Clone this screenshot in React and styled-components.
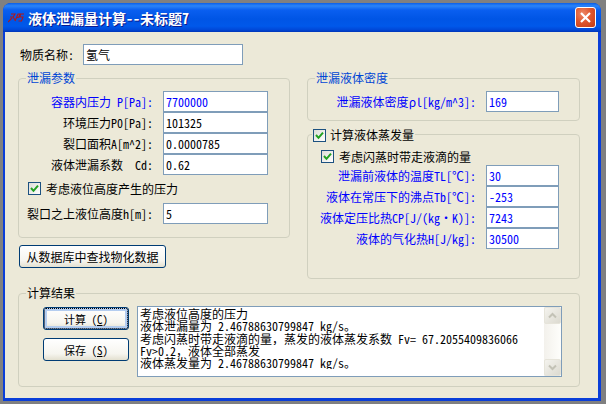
import React from "react";
import styled, { createGlobalStyle } from "styled-components";

const Global = createGlobalStyle`
  html, body { margin: 0; padding: 0; background: #808080; overflow: hidden; }
  body { width: 606px; height: 404px; }
  * { box-sizing: border-box; }
`;

const Win = styled.div`
  margin: 3px 0 0 3px;
  width: 598px;
  height: 398px;
  display: flex;
  flex-direction: column;
  border-radius: 8px 8px 0 0;
  background: #0a3ed8;
  overflow: hidden;
  font-family: "Noto Sans CJK SC", "Liberation Sans", sans-serif;
  font-feature-settings: "hwid";
  font-size: 12px;
  line-height: 14px;
  color: #000;
`;
const TitleBar = styled.div`
  height: 29px;
  flex: none;
  display: flex;
  align-items: center;
  padding: 0 5px;
  gap: 4px;
  background: linear-gradient(180deg, #0a5fe8 0%, #2b84f8 10%, #0a5ff0 24%, #0055e5 55%, #0058ea 80%, #0048d8 92%, #0035b8 100%);
`;
const TitleText = styled.div`
  flex: 1;
  font-size: 14px;
  font-weight: 700;
  color: #fff;
  text-shadow: 1px 1px 0 #0a1a90;
  white-space: pre;
`;
const CloseBtn = styled.div`
  width: 21px;
  height: 21px;
  display: flex;
  align-items: center;
  justify-content: center;
  border: 1px solid #fff;
  border-radius: 3px;
  background: radial-gradient(circle at 35% 30%, #ec8a68 0%, #e0572f 45%, #c23a14 100%);
`;
const Client = styled.div`
  flex: 1;
  margin: 0 3px 3px 2px;
  padding: 12px 18px 0 13px;
  background: #ece9d8;
`;
const Columns = styled.div`
  display: grid;
  grid-template-columns: 272px 273px;
  column-gap: 17px;
`;
const Column = styled.div`
  display: flex;
  flex-direction: column;
  align-items: flex-start;
`;
const NameRow = styled.div`
  height: 21px;
  display: flex;
  align-items: center;
  padding-left: 2px;
  gap: 9px;
`;
const Group = styled.div`
  position: relative;
  width: 100%;
  height: ${(p) => p.$h}px;
  margin-top: ${(p) => p.$mt}px;
  padding-top: ${(p) => p.$pt ?? 12}px;
  border: 1px solid #d0d0bf;
  border-radius: 4px;
`;
const Legend = styled.div`
  position: absolute;
  top: -8px;
  left: 7px;
  padding: 0 1px 0 1px;
  background: #ece9d8;
  color: ${(p) => p.$c || "#0046d5"};
  white-space: pre;
`;
const CheckLegend = styled(Legend)`
  top: -7px;
  left: 4px;
  display: flex;
  align-items: center;
  gap: 4px;
  color: #000;
`;
const Row = styled.div`
  height: 21px;
  display: flex;
  align-items: center;
  justify-content: flex-end;
  gap: 10px;
  padding-right: ${(p) => p.$pr}px;
  margin-top: ${(p) => p.$mt || 0}px;
`;
const Label = styled.div`
  color: ${(p) => (p.$blue ? "#0000ff" : "#000")};
  white-space: pre;
`;
const Wide = styled.span`
  font-feature-settings: normal;
`;
const Field = styled.div`
  width: ${(p) => p.$w}px;
  height: 21px;
  border: 1px solid #7f9db9;
  background: #fff;
  padding: 0 2px;
  display: flex;
  align-items: center;
  color: ${(p) => (p.$blue ? "#0000ff" : "#000")};
  white-space: pre;
`;
const CheckRow = styled.div`
  display: flex;
  align-items: center;
  gap: 5px;
  height: 13px;
  margin-top: ${(p) => p.$mt || 0}px;
  padding-left: ${(p) => p.$pl}px;
  white-space: pre;
`;
const Box = styled.div`
  width: 13px;
  height: 13px;
  flex: none;
  border: 1px solid #1c5180;
  background: linear-gradient(135deg, #dcdcd7, #fff);
  display: flex;
  align-items: center;
  justify-content: center;
`;
const Button = styled.div`
  width: ${(p) => p.$w}px;
  height: 23px;
  display: flex;
  align-items: center;
  justify-content: center;
  border: 1px solid #003c74;
  border-radius: 3px;
  background: linear-gradient(180deg, #fff 0%, #f6f5ef 70%, #e3e0d0 100%);
  white-space: pre;
  font-size: ${(p) => p.$fs || 12}px;
  margin-top: ${(p) => p.$mt || 0}px;
  margin-left: ${(p) => p.$ml || 0}px;
  ${(p) =>
    p.$focus &&
    `box-shadow: inset 0 0 0 3px #b4cdf0; outline: 1px dotted #000; outline-offset: -2px;`}
`;
const ResultBody = styled.div`
  display: flex;
  align-items: flex-start;
  padding-left: 24px;
  gap: 8px;
`;
const Buttons = styled.div`
  display: flex;
  flex-direction: column;
  gap: 8px;
  padding-top: 1px;
`;
const Memo = styled.div`
  width: 425px;
  height: 71px;
  border: 1px solid #7f9db9;
  background: #fff;
  display: flex;
`;
const MemoText = styled.div`
  flex: 1;
  padding: 1px 0 0 2px;
`;
const MemoLine = styled.div`
  height: 12.25px;
  line-height: 12.25px;
  white-space: pre;
  overflow: hidden;
`;
const Scroll = styled.div`
  width: 17px;
  display: flex;
  flex-direction: column;
  justify-content: space-between;
  background: linear-gradient(90deg, #f3f1ec, #fefefb);
`;
const ScrollBtn = styled.div`
  width: 17px;
  height: 17px;
  display: flex;
  align-items: center;
  justify-content: center;
  border: 1px solid #e6e4da;
  border-radius: 2px;
  background: linear-gradient(135deg, #f4f3ee, #dcdad0);
`;

const Check = () => (
  <svg width="9" height="9" viewBox="0 0 9 9">
    <path d="M1 4 L3.5 6.8 L8 1.6" fill="none" stroke="#21a121" strokeWidth="2" />
  </svg>
);
const Checkbox = () => (
  <Box>
    <Check />
  </Box>
);
const Chevron = ({ up }) => (
  <svg width="9" height="7" viewBox="0 0 9 7">
    <path d={up ? "M1 5.5 L4.5 2 L8 5.5" : "M1 1.5 L4.5 5 L8 1.5"} fill="none" stroke="#c3c2b6" strokeWidth="2" />
  </svg>
);
const AppIcon = () => (
  <svg width="16" height="10" viewBox="0 0 16 10" style={{ flex: "none" }}>
    <path
      d="M0 9 L4 5 M3 1 L7 1 L5 4 L2 4 M5 4 L7 7 M7 8 L10 1 L12 1 L11 4 L8 5 M16 1 L12.5 1 L12 4 L15 4 L13.5 8 L10.5 8"
      fill="none"
      stroke="#b01818"
      strokeWidth="1.1"
    />
  </svg>
);

export default function App() {
  return (
    <>
      <Global />
      <Win>
        <TitleBar>
          <AppIcon />
          <TitleText>液体泄漏量计算--未标题7</TitleText>
          <CloseBtn>
            <svg width="13" height="13" viewBox="0 0 13 13">
              <path d="M2 2 L11 11 M11 2 L2 11" stroke="#fff" strokeWidth="2.2" />
            </svg>
          </CloseBtn>
        </TitleBar>
        <Client>
          <Columns>
            <Column>
              <NameRow>
                <Label>物质名称:</Label>
                <Field $w={160}>氢气</Field>
              </NameRow>
              <Group $mt={13} $h={160}>
                <Legend>泄漏参数</Legend>
                <Row $pr={21}>
                  <Label $blue>容器内压力 P[Pa]:</Label>
                  <Field $w={105} $blue>7700000</Field>
                </Row>
                <Row $pr={21}>
                  <Label>环境压力P0[Pa]:</Label>
                  <Field $w={105}>101325</Field>
                </Row>
                <Row $pr={21}>
                  <Label>裂口面积A[m^2]:</Label>
                  <Field $w={105}>0.0000785</Field>
                </Row>
                <Row $pr={21}>
                  <Label>液体泄漏系数  Cd:</Label>
                  <Field $w={105}>0.62</Field>
                </Row>
                <CheckRow $mt={7} $pl={9}>
                  <Checkbox />
                  考虑液位高度产生的压力
                </CheckRow>
                <Row $pr={21} $mt={8}>
                  <Label>裂口之上液位高度h[m]:</Label>
                  <Field $w={105}>5</Field>
                </Row>
              </Group>
              <Button $w={147} $mt={7} $ml={1}>从数据库中查找物化数据</Button>
            </Column>
            <Column>
              <Group $mt={34} $h={43}>
                <Legend>泄漏液体密度</Legend>
                <Row $pr={20}>
                  <Label $blue>泄漏液体密度<Wide>ρ</Wide>l[kg/m^3]:</Label>
                  <Field $w={73} $blue>169</Field>
                </Row>
              </Group>
              <Group $mt={13} $h={145} $pt={15}>
                <CheckLegend>
                  <Checkbox />
                  计算液体蒸发量
                </CheckLegend>
                <CheckRow $pl={13}>
                  <Checkbox />
                  考虑闪蒸时带走液滴的量
                </CheckRow>
                <Row $pr={20} $mt={2}>
                  <Label $blue>泄漏前液体的温度TL[<Wide>℃</Wide>]:</Label>
                  <Field $w={73} $blue>30</Field>
                </Row>
                <Row $pr={20}>
                  <Label $blue>液体在常压下的沸点Tb[<Wide>℃</Wide>]:</Label>
                  <Field $w={73} $blue>-253</Field>
                </Row>
                <Row $pr={20}>
                  <Label $blue>液体定压比热CP[J/(kg<Wide>·</Wide>K)]:</Label>
                  <Field $w={73} $blue>7243</Field>
                </Row>
                <Row $pr={20}>
                  <Label $blue>液体的气化热H[J/kg]:</Label>
                  <Field $w={73} $blue>30500</Field>
                </Row>
              </Group>
            </Column>
          </Columns>
          <Group $mt={14} $h={94}>
            <Legend $c="#000">计算结果</Legend>
            <ResultBody>
              <Buttons>
                <Button $w={86} $fs={11} $focus>计算 (<u>C</u>)</Button>
                <Button $w={86} $fs={11}>保存 (<u>S</u>)</Button>
              </Buttons>
              <Memo>
                <MemoText>
                  <MemoLine>考虑液位高度的压力</MemoLine>
                  <MemoLine>液体泄漏量为 2.46788630799847 kg/s<Wide>。</Wide></MemoLine>
                  <MemoLine>考虑闪蒸时带走液滴的量<Wide>，</Wide>蒸发的液体蒸发系数 Fv= 67.2055409836066</MemoLine>
                  <MemoLine>Fv&gt;0.2<Wide>，</Wide>液体全部蒸发</MemoLine>
                  <MemoLine>液体蒸发量为 2.46788630799847 kg/s<Wide>。</Wide></MemoLine>
                </MemoText>
                <Scroll>
                  <ScrollBtn><Chevron up /></ScrollBtn>
                  <ScrollBtn><Chevron /></ScrollBtn>
                </Scroll>
              </Memo>
            </ResultBody>
          </Group>
        </Client>
      </Win>
    </>
  );
}
